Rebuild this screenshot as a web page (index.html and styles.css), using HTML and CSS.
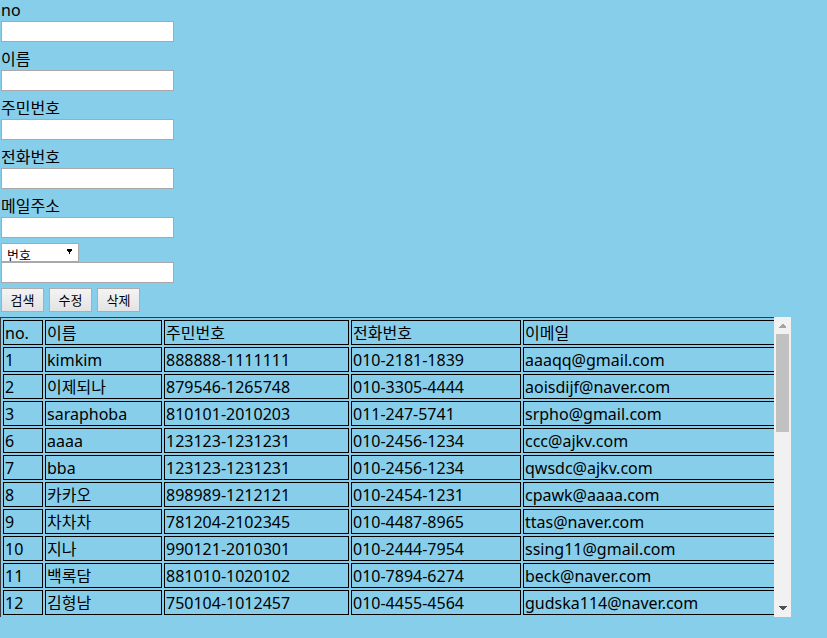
FILE: index.html
```html
<!DOCTYPE html>
<html lang="ko">
<head>
<meta charset="utf-8">
<title>주소록</title>
<link rel="stylesheet" href="styles.css">
</head>
<body>
<div class="form">
  <div class="label">no</div>
  <input class="field" type="text">
  <div class="label">이름</div>
  <input class="field" type="text">
  <div class="label">주민번호</div>
  <input class="field" type="text">
  <div class="label">전화번호</div>
  <input class="field" type="text">
  <div class="label">메일주소</div>
  <input class="field field-last" type="text">
  <select class="sel">
    <option>번호</option>
    <option>이름</option>
    <option>주민번호</option>
    <option>전화번호</option>
    <option>이메일</option>
  </select>
  <input class="field field-search" type="text">
  <div class="buttons">
    <button class="btn" type="button">검색</button>
    <button class="btn" type="button">수정</button>
    <button class="btn" type="button">삭제</button>
  </div>
</div>
<div class="list">
  <div class="viewport">
    <table class="grid">
      <thead>
        <tr><th class="c-no">no.</th><th class="c-name">이름</th><th class="c-jumin">주민번호</th><th class="c-tel">전화번호</th><th class="c-mail">이메일</th></tr>
      </thead>
      <tbody>
        <tr><td>1</td><td>kimkim</td><td>888888-1111111</td><td>010-2181-1839</td><td>aaaqq@gmail.com</td></tr>
        <tr><td>2</td><td>이제되나</td><td>879546-1265748</td><td>010-3305-4444</td><td>aoisdijf@naver.com</td></tr>
        <tr><td>3</td><td>saraphoba</td><td>810101-2010203</td><td>011-247-5741</td><td>srpho@gmail.com</td></tr>
        <tr><td>6</td><td>aaaa</td><td>123123-1231231</td><td>010-2456-1234</td><td>ccc@ajkv.com</td></tr>
        <tr><td>7</td><td>bba</td><td>123123-1231231</td><td>010-2456-1234</td><td>qwsdc@ajkv.com</td></tr>
        <tr><td>8</td><td>카카오</td><td>898989-1212121</td><td>010-2454-1231</td><td>cpawk@aaaa.com</td></tr>
        <tr><td>9</td><td>차차차</td><td>781204-2102345</td><td>010-4487-8965</td><td>ttas@naver.com</td></tr>
        <tr><td>10</td><td>지나</td><td>990121-2010301</td><td>010-2444-7954</td><td>ssing11@gmail.com</td></tr>
        <tr><td>11</td><td>백록담</td><td>881010-1020102</td><td>010-7894-6274</td><td>beck@naver.com</td></tr>
        <tr><td>12</td><td>김형남</td><td>750104-1012457</td><td>010-4455-4564</td><td>gudska114@naver.com</td></tr>
        <tr><td>13</td><td>박지수</td><td>920315-2034512</td><td>010-3321-7788</td><td>jisoo92@gmail.com</td></tr>
        <tr><td>14</td><td>leeho</td><td>880722-1045673</td><td>010-5512-3390</td><td>leeho@naver.com</td></tr>
        <tr><td>15</td><td>최민준</td><td>950630-1023456</td><td>010-9087-1123</td><td>minjun@daum.net</td></tr>
        <tr><td>16</td><td>한가람</td><td>910909-2087654</td><td>010-2233-4455</td><td>garam@naver.com</td></tr>
        <tr><td>17</td><td>tester</td><td>111111-1111111</td><td>010-1111-1111</td><td>test@test.com</td></tr>
        <tr><td>18</td><td>정우성</td><td>730320-1012345</td><td>010-7777-8888</td><td>woosung@gmail.com</td></tr>
        <tr><td>19</td><td>오하늘</td><td>990101-2012345</td><td>010-6543-2100</td><td>sky99@naver.com</td></tr>
        <tr><td>20</td><td>hong</td><td>850505-1055555</td><td>010-5050-5050</td><td>hong@ajkv.com</td></tr>
        <tr><td>21</td><td>윤서연</td><td>930214-2021456</td><td>010-4141-2323</td><td>seoyeon@gmail.com</td></tr>
        <tr><td>22</td><td>강다니엘</td><td>961210-1034789</td><td>010-8282-1004</td><td>daniel@naver.com</td></tr>
        <tr><td>23</td><td>임수정</td><td>790711-2045612</td><td>010-3434-5656</td><td>sujung@daum.net</td></tr>
        <tr><td>24</td><td>bbbb</td><td>321321-3213213</td><td>010-9999-0000</td><td>bbb@aaaa.com</td></tr>
        <tr><td>25</td><td>송하나</td><td>940404-2011122</td><td>010-1212-3434</td><td>hana@gmail.com</td></tr>
        <tr><td>26</td><td>조현우</td><td>870817-1098765</td><td>010-6767-8989</td><td>hyunwoo@naver.com</td></tr>
        <tr><td>27</td><td>신유리</td><td>980228-2076543</td><td>010-2020-3030</td><td>yuri98@gmail.com</td></tr>
        <tr><td>28</td><td>kang</td><td>820101-1012121</td><td>010-4545-6767</td><td>kang@ajkv.com</td></tr>
        <tr><td>29</td><td>배수지</td><td>941010-2034343</td><td>010-1357-2468</td><td>suzy@naver.com</td></tr>
        <tr><td>30</td><td>류준열</td><td>860925-1056565</td><td>010-8642-9753</td><td>junyeol@gmail.com</td></tr>
        <tr><td>31</td><td>문채원</td><td>861113-2078787</td><td>010-3690-1470</td><td>chaewon@daum.net</td></tr>
      </tbody>
    </table>
  </div>
  <div class="scrollbar" aria-hidden="true">
    <span class="sb-up"></span>
    <span class="sb-thumb"></span>
    <span class="sb-down"></span>
  </div>
</div>
</body>
</html>
```

FILE: styles.css
```css
html, body {
  margin: 0;
  padding: 0;
}

body {
  background: #87ceeb;
  color: #000;
  font-family: "Noto Sans", "Noto Sans CJK KR", sans-serif;
  font-size: 16px;
}

.form {
  padding-left: 1px;
}

.label {
  height: 21px;
  line-height: 21px;
  white-space: nowrap;
}

.field {
  display: block;
  box-sizing: border-box;
  width: 173px;
  height: 21px;
  margin: 0 0 7px 0;
  padding: 1px 2px;
  border: 1px solid #a9a9a9;
  background: #fff;
  font: 13px "Noto Sans", "Noto Sans CJK KR", sans-serif;
  outline: none;
}

.field-last {
  margin-bottom: 5px;
}

.field-search {
  margin-bottom: 5px;
}

.sel {
  display: block;
  box-sizing: border-box;
  width: 78px;
  height: 19px;
  margin: 0;
  padding: 4px 0 0 5px;
  border: 1px solid #a9a9a9;
  border-radius: 0;
  -webkit-appearance: none;
  appearance: none;
  background-color: #fff;
  background-image: conic-gradient(from -30deg at 50% 100%, #000 60deg, transparent 0);
  background-size: 7px 5px;
  background-repeat: no-repeat;
  background-position: right 5px top 5px;
  color: #000;
  font: 13px/14px "Noto Sans", "Noto Sans CJK KR", sans-serif;
}

.buttons {
  display: flex;
  gap: 5px;
  margin-bottom: 5px;
}

.btn {
  box-sizing: border-box;
  width: 43px;
  height: 24px;
  margin: 0;
  padding: 0;
  border: 1px solid #adadad;
  border-radius: 0;
  background: linear-gradient(#f4f4f4, #e3e3e3);
  color: #000;
  font: 13px/20px "Noto Sans", "Noto Sans CJK KR", sans-serif;
  text-align: center;
}

.list {
  display: flex;
  width: 791px;
  height: 300px;
}

.viewport {
  width: 774px;
  height: 300px;
  overflow-x: hidden;
  overflow-y: auto;
}

.scrollbar {
  display: flex;
  flex-direction: column;
  width: 17px;
  height: 300px;
  background: #f1f1f1;
}

.sb-up,
.sb-down {
  display: block;
  height: 17px;
  background-size: 8px 4px;
  background-repeat: no-repeat;
}

.sb-up {
  background-image: conic-gradient(from 135deg at 50% 0, #a3a3a3 90deg, transparent 0);
  background-position: center 7px;
}

.sb-down {
  margin-top: auto;
  background-image: conic-gradient(from -45deg at 50% 100%, #505050 90deg, transparent 0);
  background-position: center 6px;
}

.sb-thumb {
  display: block;
  height: 98px;
  margin: 0 2px;
  background: #c1c1c1;
}

.grid {
  table-layout: fixed;
  width: 826px;
  border-collapse: separate;
  border-spacing: 2px;
  border: 1px solid #3a3a3a;
}

.grid th,
.grid td {
  box-sizing: border-box;
  height: 25px;
  padding: 2px 1px 0 1px;
  border: 1px solid #000;
  font-weight: normal;
  text-align: left;
  line-height: 21px;
  white-space: nowrap;
  overflow: hidden;
  vertical-align: middle;
}

.c-no { width: 40px; }
.c-name { width: 117px; }
.c-jumin { width: 185px; }
.c-tel { width: 170px; }
.c-mail { width: 300px; }
```
